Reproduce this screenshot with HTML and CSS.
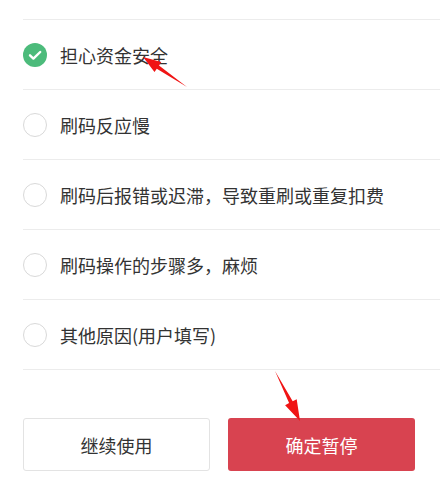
FILE: index.html
```html
<!DOCTYPE html>
<html lang="zh-CN">
<head>
  <meta charset="UTF-8">
  <meta name="viewport" content="width=device-width, initial-scale=1.0">
  <title>暂停原因</title>
  <link rel="stylesheet" href="styles.css">
</head>
<body>
  <div class="reasons">
    <div class="reason is-checked">
      <span class="reason__radio">
        <svg viewBox="0 0 24 24" width="24" height="24"><path d="M7 12.3l3.4 3.3L17.2 9" fill="none" stroke="#fff" stroke-width="2.4" stroke-linecap="round" stroke-linejoin="round"/></svg>
      </span>
      <span class="reason__text">担心资金安全</span>
    </div>
    <div class="reason">
      <span class="reason__radio"></span>
      <span class="reason__text">刷码反应慢</span>
    </div>
    <div class="reason">
      <span class="reason__radio"></span>
      <span class="reason__text">刷码后报错或迟滞，导致重刷或重复扣费</span>
    </div>
    <div class="reason">
      <span class="reason__radio"></span>
      <span class="reason__text">刷码操作的步骤多，麻烦</span>
    </div>
    <div class="reason">
      <span class="reason__radio"></span>
      <span class="reason__text">其他原因(用户填写)</span>
    </div>
  </div>
  <div class="actions">
    <button class="button button--plain">继续使用</button>
    <button class="button button--danger">确定暂停</button>
  </div>
  <svg class="marks" viewBox="0 0 440 485" width="440" height="485">
    <polygon points="143,57 161.3,62.1 159,65.4 187,87 156.8,68.8 154.5,72.1" fill="#f01414"/>
    <polygon points="300,421 296.7,399.2 292.7,401.3 275,371 289.1,403.1 285.1,405.2" fill="#f01414"/>
  </svg>
</body>
</html>
```

FILE: styles.css
```css
* {
  box-sizing: border-box;
}

html,
body {
  margin: 0;
  height: 100%;
  overflow: hidden;
}

body {
  position: relative;
  width: 440px;
  background: #fff;
  font-family: "Noto Sans CJK SC", "Noto Sans", sans-serif;
  color: #333;
}

.reasons {
  margin-top: 19px;
  margin-left: 23px;
  border-top: 1px solid #ececec;
}

.reason {
  display: flex;
  align-items: center;
  height: 70px;
  border-bottom: 1px solid #ececec;
}

.reason__radio {
  flex: none;
  display: flex;
  align-items: center;
  justify-content: center;
  width: 24px;
  height: 24px;
  border: 1.5px solid #d9d9d9;
  border-radius: 50%;
}

.reason.is-checked .reason__radio {
  border: none;
  background: #4cbb7b;
}

.reason__text {
  margin-left: 13px;
  font-size: 18px;
  line-height: 1;
}

.actions {
  display: flex;
  gap: 18px;
  margin-top: 48px;
  padding-left: 23px;
}

.button {
  appearance: none;
  -webkit-appearance: none;
  width: 187px;
  height: 53px;
  border-radius: 3px;
  font-family: inherit;
  font-size: 18px;
  cursor: pointer;
}

.button--plain {
  border: 1px solid #e3e3e3;
  background: #fff;
  color: #333;
}

.button--danger {
  border: none;
  background: #d84350;
  color: #fff;
}

.marks {
  position: absolute;
  left: 0;
  top: 0;
  pointer-events: none;
}
```
